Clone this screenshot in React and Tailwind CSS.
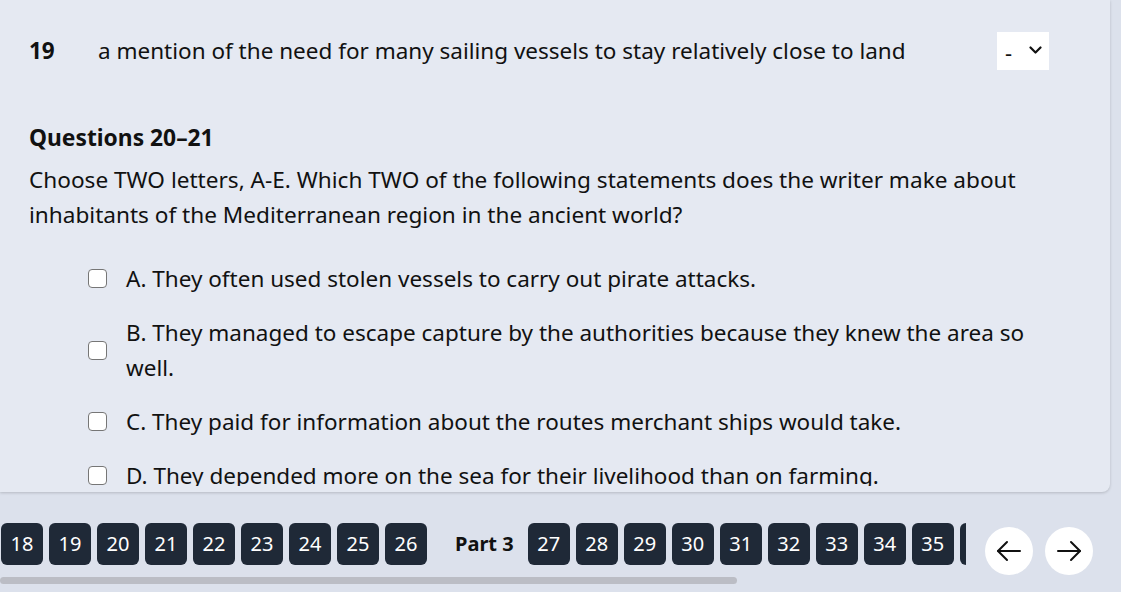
import React, { useState } from "react";

const options = [
  "A. They often used stolen vessels to carry out pirate attacks.",
  "B. They managed to escape capture by the authorities because they knew the area so well.",
  "C. They paid for information about the routes merchant ships would take.",
  "D. They depended more on the sea for their livelihood than on farming.",
  "E. They often traded with pirates.",
];

const partTwo = [18, 19, 20, 21, 22, 23, 24, 25, 26];
const partThree = [27, 28, 29, 30, 31, 32, 33, 34, 35, 36, 37, 38, 39, 40];

const NavButton = ({ n }) => (
  <button className="w-[42px] h-[42px] shrink-0 rounded-md bg-[#1f2937] text-white text-[20px] leading-none flex items-center justify-center">
    {n}
  </button>
);

const Arrow = ({ flip }) => (
  <svg
    width="26"
    height="22"
    viewBox="0 0 26 22"
    fill="none"
    stroke="#111"
    strokeWidth="2"
    strokeLinecap="round"
    strokeLinejoin="round"
    className={flip ? "rotate-180" : ""}
  >
    <path d="M24 11H2" />
    <path d="M11 2 2 11l9 9" />
  </svg>
);

const App = () => {
  const [checked, setChecked] = useState({});

  const toggle = (i) => setChecked({ ...checked, [i]: !checked[i] });

  return (
    <div
      className="w-[1121px] h-[592px] bg-[#dce1ec] flex flex-col overflow-hidden text-[#111]"
      style={{ fontFamily: '"Noto Sans", "Open Sans", sans-serif' }}
    >
      {/* question card */}
      <div className="w-[1110px] h-[492px] shrink-0 bg-[#e5e9f2] rounded-br-lg shadow-[0_1px_3px_rgba(0,0,0,0.18)] pb-[6px]">
        <div className="h-full overflow-hidden px-[29px] pt-[29px]">
          <div className="flex items-center h-[44px]">
            <span className="w-[69px] text-[22.5px] font-bold">19</span>
            <span className="flex-1 text-[22.5px]">
              a mention of the need for many sailing vessels to stay relatively close to land
            </span>
            <div className="w-[52px] h-[38px] bg-white flex items-center justify-between pl-[8px] pr-[7px] mr-[32px]">
              <span className="text-[22px] leading-none mt-[2px]">-</span>
              <svg width="13" height="8" viewBox="0 0 13 8" fill="none" stroke="#111" strokeWidth="2.2" strokeLinecap="round" strokeLinejoin="round" className="mb-[2px]">
                <path d="M1.5 1.5 6.5 6.5 11.5 1.5" />
              </svg>
            </div>
          </div>

          <h3 className="mt-[47px] text-[22.8px] font-bold leading-[35px]">Questions 20–21</h3>
          <p className="mt-[7px] text-[22.6px] leading-[35px] pr-[40px]">
            Choose TWO letters, A-E. Which TWO of the following statements does the writer make about
            inhabitants of the Mediterranean region in the ancient world?
          </p>

          <div className="mt-[29px] pl-[59px] flex flex-col gap-[19px]">
            {options.map((o, i) => (
              <label key={i} className="flex items-center gap-[19px] cursor-pointer">
                <input
                  type="checkbox"
                  checked={!!checked[i]}
                  onChange={() => toggle(i)}
                  className="w-[19px] h-[19px] shrink-0 appearance-none bg-white border border-[#767676] rounded-[4px] checked:bg-[#1f2937]"
                />
                <span className="text-[22.5px] leading-[35px] pr-[55px]">{o}</span>
              </label>
            ))}
          </div>
        </div>
      </div>

      {/* footer navigation */}
      <div className="flex items-start pt-[31px]">
        <div className="flex-1 min-w-0 flex flex-col gap-[12px]">
          <div className="overflow-hidden">
            <div className="flex items-center gap-[6px] pl-px w-max">
              {partTwo.map((n) => (
                <NavButton key={n} n={n} />
              ))}
              <span className="pl-[22px] pr-[8px] text-[20px] font-bold">Part 3</span>
              {partThree.map((n) => (
                <NavButton key={n} n={n} />
              ))}
            </div>
          </div>
          <div className="w-[737px] h-[7px] rounded-full bg-[#bbbdc5]" />
        </div>
        <div className="flex gap-3 ml-[19px] mr-[28px] mt-[4px]">
          <button className="w-12 h-12 rounded-full bg-white flex items-center justify-center">
            <Arrow />
          </button>
          <button className="w-12 h-12 rounded-full bg-white flex items-center justify-center">
            <Arrow flip />
          </button>
        </div>
      </div>
    </div>
  );
};

export default App;
